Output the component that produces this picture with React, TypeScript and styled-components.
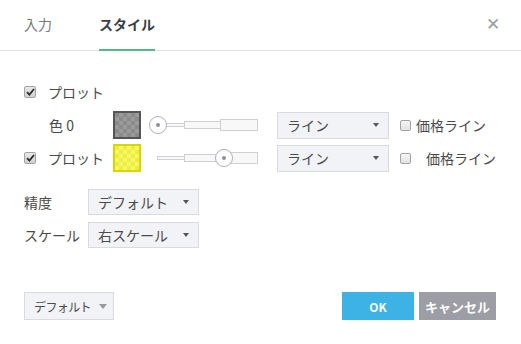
import React from "react";
import styled, { createGlobalStyle, css } from "styled-components";

const Global = createGlobalStyle`
  html, body { margin: 0; padding: 0; background: #fff; }
  body { font-family: "Noto Sans CJK JP", "Noto Sans", sans-serif; color: #4a4a4a; }
  * { box-sizing: border-box; }
`;

const Dialog = styled.div`
  width: 521px;
  height: 344px;
  background: #fff;
  display: flex;
  flex-direction: column;
`;

const Header = styled.div`
  height: 51px;
  border-bottom: 1px solid #e0e1e4;
  display: flex;
  align-items: stretch;
  padding: 0 0 0 24px;
  position: relative;
`;

const Tab = styled.div<{ $active?: boolean }>`
  font-size: 14px;
  display: flex;
  align-items: center;
  padding-bottom: 2px;
  margin-right: 47px;
  color: #7a7a7a;
  position: relative;
  ${(p) =>
    p.$active &&
    css`
      color: #3a3f47;
      font-weight: 600;
      &::after {
        content: "";
        position: absolute;
        left: 0;
        right: 0;
        bottom: -1px;
        height: 2px;
        background: #53b987;
      }
    `}
`;

const Close = styled.div`
  position: absolute;
  right: 21px;
  top: 14px;
  font-size: 17px;
  color: #9a9ca2;
  line-height: 1;
`;

const Body = styled.div`
  padding: 27px 0 0 24px;
  display: flex;
  flex-direction: column;
`;

const PlotRows = styled.div`
  display: flex;
  flex-direction: column;
  gap: 5px;
`;

const Row = styled.div`
  height: 28px;
  display: flex;
  align-items: center;
`;

const CheckCell = styled.div`
  width: 24px;
  display: flex;
  align-items: center;
`;

const Box = styled.div<{ $checked?: boolean }>`
  width: ${(p) => (p.$checked ? 12 : 11)}px;
  height: ${(p) => (p.$checked ? 12 : 11)}px;
  border: 1px solid #a3a3a3;
  border-radius: 2px;
  background: ${(p) => (p.$checked ? "linear-gradient(#e8e8e8, #d0d0d0)" : "linear-gradient(#f6f6f6, #e2e2e2)")};
  display: flex;
  align-items: center;
  justify-content: center;
`;

const Label = styled.div<{ $w: number; $indent?: number }>`
  width: ${(p) => p.$w}px;
  padding-left: ${(p) => p.$indent ?? 0}px;
  font-size: 14px;
  color: #4a4a4a;
  white-space: nowrap;
`;

const Swatch = styled.div<{ $border: string; $a: string; $b: string }>`
  width: 28px;
  height: 28px;
  border: 2px solid ${(p) => p.$border};
  background-color: ${(p) => p.$a};
  background-image: linear-gradient(45deg, ${(p) => p.$b} 25%, transparent 25%, transparent 75%, ${(p) => p.$b} 75%),
    linear-gradient(45deg, ${(p) => p.$b} 25%, transparent 25%, transparent 75%, ${(p) => p.$b} 75%);
  background-size: 8px 8px;
  background-position: 0 0, 4px 4px;
  margin-right: 7px;
`;

const Slider = styled.div`
  width: 111px;
  height: 20px;
  position: relative;
  display: flex;
  align-items: center;
  padding-left: 10px;
  margin-right: 18px;
`;

const Seg = styled.div<{ $w: number; $h: number }>`
  width: ${(p) => p.$w}px;
  height: ${(p) => p.$h}px;
  border: 1px solid #cfd0d4;
  background: #f8f8f8;
  margin-left: -1px;
`;

const Thumb = styled.div`
  position: absolute;
  top: 1px;
  width: 18px;
  height: 18px;
  border-radius: 50%;
  border: 1px solid #aeb0b8;
  background: #fff;
  display: flex;
  align-items: center;
  justify-content: center;
  &::after {
    content: "";
    width: 4px;
    height: 4px;
    border-radius: 50%;
    background: #8e919c;
  }
`;

const Select = styled.div<{ $w: number; $h?: number }>`
  width: ${(p) => p.$w}px;
  height: ${(p) => p.$h ?? 27}px;
  border: 1px solid #dadbe0;
  background: #f2f3f7;
  display: flex;
  align-items: center;
  justify-content: space-between;
  padding: 0 9px 0 9px;
  font-size: 14px;
  color: #4a4a4a;
  white-space: nowrap;
`;

const Caret = styled.div<{ $size?: number; $color?: string }>`
  flex: none;
  width: 0;
  height: 0;
  border-left: ${(p) => (p.$size ?? 7) / 2}px solid transparent;
  border-right: ${(p) => (p.$size ?? 7) / 2}px solid transparent;
  border-top: ${(p) => Math.round((p.$size ?? 7) * 0.55)}px solid ${(p) => p.$color ?? "#555"};
`;

const PriceLine = styled.div<{ $gap: number }>`
  display: flex;
  align-items: center;
  gap: ${(p) => p.$gap}px;
  margin-left: 11px;
  font-size: 14px;
  color: #4a4a4a;
  white-space: nowrap;
`;

const SettingRows = styled.div`
  display: flex;
  flex-direction: column;
  gap: 7px;
  margin-top: 17px;
`;

const SettingRow = styled.div`
  display: flex;
  align-items: center;
  height: 26px;
`;

const Footer = styled.div`
  display: flex;
  align-items: center;
  justify-content: space-between;
  padding: 0 25px 0 24px;
  margin-top: 44px;
`;

const DefaultBtn = styled.div`
  width: 90px;
  height: 28px;
  border: 1px solid #dadbe0;
  background: #f2f3f7;
  display: flex;
  align-items: center;
  gap: 8px;
  padding-left: 9px;
  font-size: 12px;
  letter-spacing: -0.6px;
  color: #4a4a4a;
  white-space: nowrap;
`;

const Actions = styled.div`
  display: flex;
  gap: 5px;
`;

const Btn = styled.div<{ $bg: string; $w: number; $size: number }>`
  width: ${(p) => p.$w}px;
  height: 28px;
  background: ${(p) => p.$bg};
  color: #fff;
  font-weight: 700;
  font-size: ${(p) => p.$size}px;
  display: flex;
  align-items: center;
  justify-content: center;
  white-space: nowrap;
`;

const Check = () => (
  <svg width="9" height="8" viewBox="0 0 9 8">
    <path d="M1 4.2 L3.4 6.6 L8 1" fill="none" stroke="#2f2f2f" strokeWidth="1.9" />
  </svg>
);

const CheckBox = ({ checked }: { checked?: boolean }) => (
  <Box $checked={checked}>{checked && <Check />}</Box>
);

const WidthSlider = ({ pos }: { pos: number }) => (
  <Slider>
    <Seg $w={28} $h={4} />
    <Seg $w={37} $h={8} />
    <Seg $w={38} $h={12} />
    <Thumb style={{ left: pos }} />
  </Slider>
);

export default function App() {
  return (
    <>
      <Global />
      <Dialog>
        <Header>
          <Tab>入力</Tab>
          <Tab $active>スタイル</Tab>
          <Close>✕</Close>
        </Header>
        <Body>
          <PlotRows>
            <Row>
              <CheckCell>
                <CheckBox checked />
              </CheckCell>
              <Label $w={65}>プロット</Label>
            </Row>
            <Row>
              <CheckCell />
              <Label $w={65} $indent={1}>色 0</Label>
              <Swatch $border="#555" $a="#8a8a8a" $b="#9a9a9a" />
              <WidthSlider pos={1} />
              <Select $w={112}>
                <span>ライン</span>
                <Caret />
              </Select>
              <PriceLine $gap={5}>
                <CheckBox />
                <span>価格ライン</span>
              </PriceLine>
            </Row>
            <Row>
              <CheckCell>
                <CheckBox checked />
              </CheckCell>
              <Label $w={65}>プロット</Label>
              <Swatch $border="#d6d600" $a="#eeee3c" $b="#f6f66a" />
              <WidthSlider pos={67} />
              <Select $w={112}>
                <span>ライン</span>
                <Caret />
              </Select>
              <PriceLine $gap={15}>
                <CheckBox />
                <span>価格ライン</span>
              </PriceLine>
            </Row>
          </PlotRows>
          <SettingRows>
            <SettingRow>
              <Label $w={64}>精度</Label>
              <Select $w={111} $h={26}>
                <span>デフォルト</span>
                <Caret />
              </Select>
            </SettingRow>
            <SettingRow>
              <Label $w={64}>スケール</Label>
              <Select $w={111} $h={26}>
                <span>右スケール</span>
                <Caret />
              </Select>
            </SettingRow>
          </SettingRows>
        </Body>
        <Footer>
          <DefaultBtn>
            <span>デフォルト</span>
            <Caret $size={9} $color="#9a9a9a" />
          </DefaultBtn>
          <Actions>
            <Btn $bg="#3cb3e4" $w={72} $size={12}>OK</Btn>
            <Btn $bg="#9c9da5" $w={77} $size={13}>キャンセル</Btn>
          </Actions>
        </Footer>
      </Dialog>
    </>
  );
}
